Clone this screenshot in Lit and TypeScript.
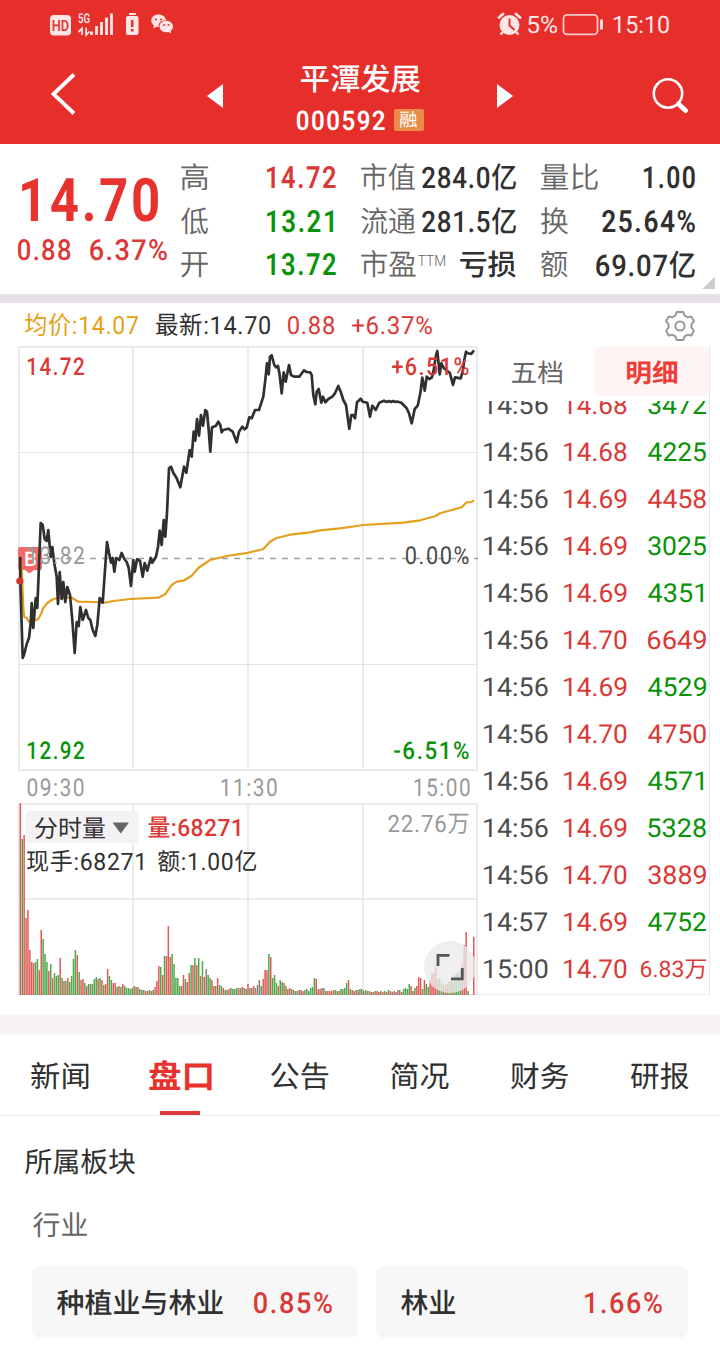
import { LitElement, html, svg, css } from "lit";
import { customElement } from "lit/decorators.js";

const FAMILY = 'Roboto, "Noto Sans CJK SC", sans-serif';
const CJK = '"Noto Sans CJK SC", sans-serif';
const RED = "#d93a37";
const GREEN = "#0a930a";
const INK = "#303030";
const GREY = "#666";

interface Style {
  size: number;
  color?: string;
  weight?: number;
  spacing?: number;
  family?: string;
}

const ctx = document.createElement("canvas").getContext("2d")! as any;

/* Text whose ink begins at x and is exactly `width` wide. */
function ink(text: string, x: number, baseline: number, width: number, s: Style) {
  const weight = s.weight ?? 400;
  const spacing = (s.spacing ?? 0) * s.size;
  const family = s.family ?? FAMILY;
  // Measured at ten times the size, where hinting no longer rounds the bounds.
  ctx.font = `${weight} ${s.size * 10}px ${family}`;
  ctx.letterSpacing = `${spacing * 10}px`;
  ctx.textRendering = "geometricPrecision";
  const m = ctx.measureText(text);
  const left = -m.actualBoundingBoxLeft / 10;
  const right = m.actualBoundingBoxRight / 10;
  const k = width / (right - left);
  return svg`<text transform=${`translate(${(x - left * k).toFixed(2)} ${baseline}) scale(${k.toFixed(4)} 1)`}
    font-family=${family} font-size=${s.size} font-weight=${weight} letter-spacing=${spacing}
    text-rendering="geometricPrecision" fill=${s.color ?? INK}>${text}</text>`;
}

/* The same text as a box for flex and grid rows, centred on its line. */
function label(text: string, width: number, s: Style, rise = 0.356) {
  const h = Math.round(s.size * 1.2);
  return html`<svg class="label" width=${width} height=${h}>${ink(text, 0, h / 2 + s.size * rise, width, s)}</svg>`;
}
const hanzi = (text: string, width: number, s: Style) => label(text, width, { family: CJK, ...s }, 0.36);

const PRICE = `20.3,558 20.3,580 22.7,658 24,655 26.7,644 29,638 30.7,623 31.7,603 33.3,628 35.7,598 37.3,608 40.7,523 42.7,525 44.7,539 46.7,541 48.3,530 50.7,557 52.3,547 54.3,563 56.7,577 58,604 59.7,572 61.7,599 63.3,582 65.3,602 67.3,587 70,595 72.3,620 74.7,653 76.7,622 78.7,626 80.3,607 82.7,620 86,610 88.3,618 90.3,620 92.7,630 95.3,636 97.3,625 99.7,598 102.7,602.7 107,542 109,553 111,562.7 112.7,558 114.3,571.7 116.3,558 119.3,560 121.7,553 124.3,559 126.7,562 128.7,568 131,586 133.3,560 134.7,571.7 137,559.3 140,560.7 142.7,576.7 144.7,563 147.3,570.7 150.7,558 152.3,562.7 156,556.7 158,547 159.7,530.7 161.7,545 163.7,520 165.3,536.7 167,513 169,468.3 171,466.7 173.3,472.7 176.7,478.3 180.3,487.3 184,466.7 186.3,472.7 189.7,450 191.7,456.7 193.7,431.7 195.3,440.7 197,419 199,435.7 201,415 203,425.7 205.3,410 207,411.7 208.7,430 210.3,451.7 212,427.3 215.7,426 218.3,421.7 220.3,425 221.7,432.3 223.3,430 228.3,428.7 232.7,431.7 236.7,442.3 239,431.7 242.3,426.7 244.7,429.3 246.7,427.5 249.3,417.3 251.7,418.3 255,410 259,410 263.3,396.7 265.3,380 267,363.3 268.7,374.3 270,356.7 271.7,355.3 274.3,365 276,367.3 278,366 279.7,375 281.7,393.3 283.7,372.3 285.7,381.7 289,365 291,375 294,376.7 299.3,376.7 304,370.3 306.7,372 310.3,372.3 311.7,375 313.3,395 315.3,404.3 316.7,391.7 318.7,389 321.3,402.7 323,396.7 325.3,402.3 328.3,399 332.3,396.7 335,393.3 338.3,386 340.7,391.7 343.3,400 346,405 349.3,428.7 351.3,415 353.3,415 355,418.3 357,402.3 360.7,398.7 362.7,401.7 367.3,402.7 370,416.7 372.3,405.7 375.7,410 379.3,402.7 384,400.7 386.7,402 389,401 391,402 393,401 395,402 397,401.5 401.3,402.7 406.7,408.3 409,413.3 411.7,423.3 414.7,409 417.7,405.7 420.3,393.3 422.3,377.7 424.7,390.7 426.7,376.7 429.3,379 432,377.3 433.7,370 435.7,356.7 437.3,351 439.7,374.3 441.3,363.3 444,368.3 449.7,372.7 451.3,378.3 453,385 455,377.3 460.7,378.3 462.7,371.7 464.3,360 466,351.7 467.7,353.3 471,354 473.3,351.3`;

const AVERAGE = `20.3,560 22,573 23.3,608 24.3,616.7 26.7,618 29,621.7 33.3,621 38.3,619 41,614 43.3,608 47.3,603 53.3,599 60,598 71.7,597.7 78.3,601.7 93.3,602 105,602.7 113.3,601 130,599 158.3,597.7 165,594.3 171.7,585 176.7,581.7 183.3,580.7 191.7,575.7 198.3,568 210,560 226.7,556 248,552.8 263.3,549 270,541.7 276.7,538 290,534.7 310,532.3 320,530.3 340,528.3 363.3,525 386.7,523.7 403.3,522.7 420,520.3 435,516.3 440,513.3 461.7,507.3 466.7,502.3 471,502 473.3,501`;

/* One bar per minute: height and direction (r up, g down, k flat). */
const VOLUME = (
  "192r 156g 160r 77r 85r 45r 33r 32r 33g 36g 25r 65r 56g 41g 33g 24r 31g 17r 22g 19g 20g 37r 17g 14r 14g 17r 13g 19g 36g 45g " +
  "40r 23g 15r 16r 12g 9r 11g 11k 11g 16g 18g 16r 17g 15r 10g 11r 26r 19g 15g 12r 12r 8g 9r 8g 11r 9g 7g 7g 6g 7g " +
  "9r 8g 8r 6g 5k 5g 4r 4k 5r 4g 5g 8r 14r 29r 28g 20r 39g 39r 69r 38r 41g 31g 17g 17g 9g 9r 20r 16g 13r 22r " +
  "30g 30r 37g 30r 37g 19r 34g 18r 26k 20g 17g 15r 9r 9g 17r 10k 9g 7r 5k 5g 6r 7g 6g 6k 7g 7r 7g 8r 7k 6g " +
  "11r 7r 7g 9r 7k 10k 15k 9g 16r 25r 25r 41g 38r 17g 20g 12g 9r 15g 13g 12r 9g 6r 7r 6g 5k 4k 4g 5r 5k 4r " +
  "5g 6k 4g 7g 8g 17g 16r 6r 6k 7r 7g 4r 4k 4r 4r 5r 5g 4g 4r 6g 6g 7g 12g 15r 6g 5k 4r 5r 5g 6k " +
  "6g 4r 5g 4k 4g 3r 3r 4g 4r 3r 4k 3r 4g 3r 5g 4r 3k 4r 3r 5k 5k 3r 6g 7g 6g 11g 9r 4r 7g 9r " +
  "18r 17r 6g 15r 11g 8g 15r 22r 22r 28r 16k 17g 12r 11g 10k 11r 13g 14r 15g 20k 22g 22g 25g 32r 50r 63r 4g 0k 0k 58r"
).split(" ");

const BAR: Record<string, string> = { r: "#e05a58", g: "#4fa849", k: "#8c8080" };

const TICKS: [string, string, string, boolean][] = [
  ["14:56", "14.68", "3472", false],
  ["14:56", "14.68", "4225", false],
  ["14:56", "14.69", "4458", true],
  ["14:56", "14.69", "3025", false],
  ["14:56", "14.69", "4351", false],
  ["14:56", "14.70", "6649", true],
  ["14:56", "14.69", "4529", false],
  ["14:56", "14.70", "4750", true],
  ["14:56", "14.69", "4571", false],
  ["14:56", "14.69", "5328", false],
  ["14:56", "14.70", "3889", true],
  ["14:57", "14.69", "4752", false],
  ["15:00", "14.70", "6.83万", true],
];

const shared = css`
  * { box-sizing: border-box; }
  svg { display: block; flex: none; overflow: visible; }
`;

@customElement("app-header")
export class AppHeader extends LitElement {
  static styles = [shared, css`
    :host { display: block; height: 144px; background: #e62e2b; }
    .status { display: flex; justify-content: space-between; height: 48px; padding: 0 50px; align-items: center; }
    .left, .right { display: flex; align-items: center; height: 48px; }
    .nav { display: flex; height: 96px; }
    .title { width: 240px; display: flex; flex-direction: column; align-items: center; padding-top: 13px; gap: 6px; }
    .code { display: flex; align-items: center; gap: 9px; width: 127px; }
    .badge { width: 30px; height: 22px; border-radius: 2px; background: #e88c48; display: flex; align-items: center; justify-content: center; }
  `];
  render() {
    const pale = "#ffe6e6";
    return html`
      <div class="status">
        <div class="left">
          <svg width="124" height="48">
            <rect y="15" width="21" height="20.5" rx="4" fill=${pale} />
            ${ink("HD", 2.5, 30.7, 16, { size: 15.5, weight: 600, color: "#e23b3a" })}
            ${ink("5G", 28.5, 22.8, 11, { size: 13.5, weight: 600, color: pale })}
            <path d="M32 35V28.500l-3.500 3.500M36.200 27.500v7.500l3.300-3.500" fill="none" stroke=${pale} stroke-width="1.8" />
            <path d="M41.500 31.500v3.500M46.500 26v9M51.500 22v13M56.500 17.500v17.500M61.500 13.500v21.500" stroke=${pale} stroke-width="2.8" />
            <rect x="79" y="13" width="7" height="2" fill=${pale} />
            <rect x="76" y="16" width="12.500" height="19" rx="2" fill=${pale} />
            <path d="M82.200 20v7M82.200 29v2.500" stroke="#df3432" stroke-width="2.600" />
            <path d="M108.500 14.500c-4.200 0-7.200 2.700-7.200 6 0 2 1 3.700 2.700 4.900l-.7 3 3-1.700c1 .3 1.700.4 2.400.4-.8-4 2.600-7.300 7.600-6.900-.7-3.400-3.900-5.700-7.800-5.700z" fill=${pale} />
            <path d="M116.200 20.800c-3.900 0-6.700 2.500-6.700 5.700s2.900 5.700 6.700 5.700c.8 0 1.500-.1 2.200-.3l2.800 1.600-.6-2.600c1.500-1 2.400-2.600 2.400-4.400 0-3.200-2.900-5.700-6.800-5.700z" fill=${pale} />
            <g fill="#dc3937"><circle cx="106" cy="19.500" r="1.100" /><circle cx="111" cy="19.500" r="1.100" /><circle cx="114" cy="25" r="1" /><circle cx="118.500" cy="25" r="1" /></g>
          </svg>
        </div>
        <div class="right">
          <svg width="172" height="48">
            <circle cx="11.500" cy="25" r="10" fill=${pale} />
            <path d="M1 17.500l4-3.500M22 17.500l-4-3.500" stroke=${pale} stroke-width="2.800" stroke-linecap="round" />
            <path d="M5 32l-2.500 2.500M18 32l2.500 2.500" stroke=${pale} stroke-width="2.400" />
            <path d="M11.500 18.500v7l5 4.500" fill="none" stroke="#e23331" stroke-width="2" />
            ${ink("5%", 30, 33, 29, { size: 24, color: pale })}
            <rect x="65.500" y="14.800" width="34" height="19.500" rx="3.500" fill="none" stroke=${pale} stroke-width="1.800" stroke-opacity=".85" />
            <path d="M103.500 19.500v10" stroke=${pale} stroke-width="2.800" />
            ${ink("15:10", 116, 33, 55, { size: 24, color: pale })}
          </svg>
        </div>
      </div>
      <div class="nav">
        <svg width="240" height="96">
          <path d="M74 26.500L53.500 46L74 65.500" fill="none" stroke="#fff" stroke-width="3.800" />
          <path d="M223 36v24l-16-12z" fill="#fff" />
        </svg>
        <div class="title">
          ${hanzi("平潭发展", 119, { size: 30.5, weight: 500, color: "#fff" })}
          <div class="code">
            ${label("000592", 88, { size: 27, weight: 600, color: "#fff", spacing: 0.06 })}
            <div class="badge">${hanzi("融", 17, { size: 18, color: "#fff" })}</div>
          </div>
        </div>
        <svg width="240" height="96">
          <path d="M17 36v24l16-12z" fill="#fff" />
          <circle cx="188" cy="45.500" r="14.200" fill="none" stroke="#fff" stroke-width="2.600" />
          <path d="M198.500 56l7 6.500" stroke="#fff" stroke-width="5" stroke-linecap="round" />
        </svg>
      </div>`;
  }
}

@customElement("quote-panel")
export class QuotePanel extends LitElement {
  static styles = [shared, css`
    :host { display: grid; position: relative; height: 159px; padding: 12px 25px 15px 17px; grid-template-columns: 151px 155px 155px 154px; column-gap: 13px; background: #fff; border-bottom: 9px solid #e6e1e6; }
    .col { display: grid; grid-template-rows: repeat(3, 43.5px); }
    .col:nth-child(3) { margin-left: 12px; margin-right: -12px; }
    .col:nth-child(4) { margin-left: 24px; margin-right: -24px; }
    .cell { display: flex; align-items: center; justify-content: space-between; }
    .name { display: flex; gap: 2px; }
    .ttm { padding-top: 4px; }
    .last { padding: 8px 0 0 4.500px; }
    .delta { display: flex; gap: 19px; padding-left: 1px; margin-top: -4px; }
    .corner { position: absolute; right: 5px; bottom: 5px; width: 12px; height: 12px; background: linear-gradient(135deg, transparent 50%, #ccc 50%); }
  `];
  render() {
    const num = (t: string, w: number, color = INK) => label(t, w, { size: 30.5, weight: 600, color, spacing: 0.06 });
    const name = (t: string, w: number) => hanzi(t, w, { size: 29.5, color: GREY, weight: 350 });
    return html`
      <div>
        <div class="last">${label("14.70", 136, { size: 60, weight: 700, color: "#e7322e", spacing: 0.05 })}</div>
        <div class="delta">
          ${label("0.88", 52.5, { size: 29, weight: 500, color: RED, spacing: 0.05 })}
          ${label("6.37%", 77, { size: 29, weight: 500, color: RED, spacing: 0.05 })}
        </div>
      </div>
      <div class="col">
        <div class="cell">${name("高", 27)}${num("14.72", 69, RED)}</div>
        <div class="cell">${name("低", 27)}<div style="padding-right:3px">${num("13.21", 66, GREEN)}</div></div>
        <div class="cell">${name("开", 27)}${num("13.72", 69, GREEN)}</div>
      </div>
      <div class="col">
        <div class="cell">${name("市值", 54)}${label("284.0亿", 94, { size: 29.5, weight: 500, spacing: 0.03 })}</div>
        <div class="cell">${name("流通", 54)}${label("281.5亿", 94, { size: 29.5, weight: 500, spacing: 0.03 })}</div>
        <div class="cell">
          <div class="name">${name("市盈", 55)}<div class="ttm">${label("TTM", 27, { size: 15.5, color: GREY, weight: 350 })}</div></div>
          ${hanzi("亏损", 56, { size: 29, weight: 500 })}
        </div>
      </div>
      <div class="col">
        <div class="cell">${name("量比", 57)}${num("1.00", 51)}</div>
        <div class="cell">${name("换", 27)}${num("25.64%", 93)}</div>
        <div class="cell">${name("额", 27)}${label("69.07亿", 99, { size: 30, weight: 500, spacing: 0.03 })}</div>
      </div>
      <div class="corner"></div>`;
  }
}

@customElement("minute-chart")
export class MinuteChart extends LitElement {
  static styles = [shared, css`:host { display: block; width: 479px; }`];
  render() {
    const side = (t: string, x: number, y: number, w: number, color: string, weight = 500) =>
      ink(t, x, y, w, { size: 24.5, weight, color, spacing: 0.07 });
    const xs = [19, 133, 248, 363, 477];
    return html`<svg width="479" height="650" viewBox="0 346 479 650">
      <g stroke="#ebebeb" stroke-width="2" fill="none">
        ${xs.map((x) => svg`<path d=${`M${x} 346V771M${x} 803V995`} />`)}
        <path d="M18 347H478M18 770H478M18 804H478M18 899H478" />
        <path d="M18 452.500H478M18 664.500H478M18 994.500H478" stroke-width="1" stroke="#e2e2e2" />
      </g>
      <path d="M90 558.500H478" stroke="#a0a0a0" stroke-width="1.600" stroke-dasharray="6 6" />
      ${VOLUME.map((v, i) => {
        const h = parseInt(v);
        const x = (19.6 + i * 1.897).toFixed(2);
        return svg`<rect x=${x} y=${995 - h} width="1.500" height=${h} fill=${BAR[v.slice(-1)]} />`;
      })}
      <path d="M20 547h20a2 2 0 0 1 2 2v19a2 2 0 0 1-2 2h-6l-4.500 3.500-4.500-3.500h-5a2 2 0 0 1-2-2v-19a2 2 0 0 1 2-2z" fill="#f26a6a" />
      ${ink("B", 25.5, 566, 10.5, { size: 20, color: "#fff", weight: 500 })}
      <polyline points=${AVERAGE} fill="none" stroke="#e3a01f" stroke-width="2.200" stroke-linejoin="round" stroke-linecap="round" />
      <polyline points=${PRICE} fill="none" stroke="#303030" stroke-width="2.700" stroke-linejoin="round" stroke-linecap="round" />
      <circle cx="19.800" cy="581" r="3.600" fill="#d43434" />
      ${side("14.72", 28, 375, 56, RED)}
      ${side("+6.51%", 392, 375, 76.5, RED)}
      ${side("13.82", 28, 564, 56, "#999", 450)}
      <path d="M42 558.500H84" stroke="#a0a0a0" stroke-width="1.500" stroke-dasharray="6 6" />
      ${side("0.00%", 406, 564, 62.5, "#4a4a4a", 450)}
      ${side("12.92", 28, 759, 56, GREEN)}
      ${side("-6.51%", 394, 759, 74.5, GREEN)}
      ${side("09:30", 27.5, 796, 56, "#999", 450)}
      ${side("11:30", 221.5, 796, 55, "#999", 450)}
      ${side("15:00", 414.5, 796, 55, "#999", 450)}
      <rect x="26" y="811" width="113" height="32" rx="4" fill="#f5f2f5" />
      ${ink("分时量", 35, 836.5, 70, { size: 24, family: CJK })}
      <path d="M112.500 822.500h16.500l-8.250 11z" fill="#666" />
      ${ink("量:68271", 148.5, 836, 91, { size: 24, weight: 500, color: RED, spacing: 0.02 })}
      ${ink("现手:68271", 27, 869.5, 115.5, { size: 24, spacing: 0.03 })}
      ${ink("额:1.00亿", 158, 869.5, 98, { size: 24, spacing: 0.03 })}
      ${ink("22.76万", 388.5, 832, 80, { size: 24, color: "#999", spacing: 0.04 })}
      <circle cx="450" cy="967" r="26" fill="#ebebeb" fill-opacity=".78" />
      <path d="M438 966V955.300H449.500M462.300 968V978.800H451" fill="none" stroke="#555" stroke-width="2.800" />
    </svg>`;
  }
}

@customElement("tick-panel")
export class TickPanel extends LitElement {
  static styles = [shared, css`
    :host { display: block; width: 231px; height: 649px; border-right: 1px solid #e8e8e8; border-bottom: 1px solid #ececec; }
    .tabs { display: flex; height: 55px; }
    .tab { width: 115px; height: 50px; padding-top: 2px; display: flex; align-items: center; justify-content: center; }
    .active { background: #fff4f4; border-radius: 6px; }
    .list { height: 593px; overflow: hidden; }
    .row { display: flex; justify-content: space-between; align-items: center; height: 47px; padding: 0 3px 0 5px; }
    .row:first-child { margin-top: -20px; }
    .value { width: 64px; display: flex; margin-right: -5px; }
    .amount { width: 66px; display: flex; justify-content: flex-end; }
    .amount.one { padding-right: 3px; }
  `];
  render() {
    return html`
      <div class="tabs">
        <div class="tab">${hanzi("五档", 50, { size: 25.5, color: GREY })}</div>
        <div class="tab active">${hanzi("明细", 50, { size: 25.5, weight: 700, color: "#ee3d38" })}</div>
      </div>
      <div class="list">
        ${TICKS.map(([time, price, amount, up]) => {
          const wide = amount.endsWith("万");
          const one = amount.endsWith("1");
          return html`<div class="row">
            ${label(time, 63.5, { size: 26, color: "#4c4c4c" })}
            <div class="value">${label(price, 62.5, { size: 26, color: RED })}</div>
            <div class="amount ${one ? "one" : ""}">${label(amount, wide ? 65 : one ? 55 : 58, { size: wide ? 23 : 26, color: up ? RED : GREEN })}</div>
          </div>`;
        })}
      </div>`;
  }
}

@customElement("sector-section")
export class SectorSection extends LitElement {
  static styles = [shared, css`
    :host { display: block; border-top: 20px solid #f7f3f7; }
    .tabs { display: grid; grid-template-columns: repeat(6, 1fr); height: 81px; border-bottom: 1px solid #ebebeb; }
    .tab { display: flex; align-items: center; justify-content: center; border-bottom: 4px solid transparent; height: 80px; padding-top: 6px; }
    .tab.active { background: linear-gradient(#d93a37, #d93a37) bottom center / 40px 4px no-repeat; background-origin: border-box; background-clip: border-box; }
    .heading { padding: 29px 0 0 25px; }
    .kind { padding: 30px 0 0 33px; }
    .cards { display: grid; grid-template-columns: 326px 312px; gap: 18px; padding: 24px 32px 0; }
    .card { display: flex; justify-content: space-between; align-items: center; height: 72px; padding: 1px 26px 0 25px; border-radius: 8px; background: #f7f7f7; }
  `];
  render() {
    const tabs = ["新闻", "盘口", "公告", "简况", "财务", "研报"];
    return html`
      <div class="tabs">
        ${tabs.map((t, i) => html`<div class="tab ${i === 1 ? "active" : ""}">
          ${i === 1
            ? hanzi(t, 63, { size: 32.5, weight: 700, color: "#e7322e" })
            : hanzi(t, 57.5, { size: 29.5 })}
        </div>`)}
      </div>
      <div class="heading">${hanzi("所属板块", 110, { size: 28 })}</div>
      <div class="kind">${hanzi("行业", 54, { size: 27.5, color: GREY })}</div>
      <div class="cards">
        <div class="card">${hanzi("种植业与林业", 166, { size: 28, weight: 500 })}${label("0.85%", 78, { size: 29, weight: 500, color: RED, spacing: 0.06 })}</div>
        <div class="card">${hanzi("林业", 54, { size: 28, weight: 500 })}${label("1.66%", 77, { size: 29, weight: 500, color: RED, spacing: 0.06 })}</div>
      </div>`;
  }
}

@customElement("app-root")
export class AppRoot extends LitElement {
  static styles = [shared, css`
    :host { display: block; width: 720px; height: 1355px; overflow: hidden; background: #fff; }
    .summary { display: flex; align-items: center; height: 43px; padding: 2px 25px 0 25px; }
    .summary .item { margin: -2px 18px 0 0; }
    .gear { margin-left: auto; }
    .market { display: flex; height: 669px; }
  `];
  render() {
    const s = { size: 25, spacing: 0.03 };
    return html`
      <app-header></app-header>
      <quote-panel></quote-panel>
      <div class="summary">
        <div class="item">${label("均价:14.07", 113, { ...s, color: "#e6a117" })}</div>
        <div class="item">${label("最新:14.70", 114, s)}</div>
        <div class="item">${label("0.88", 46, { ...s, color: RED })}</div>
        <div class="item">${label("+6.37%", 80, { ...s, color: RED })}</div>
        <svg class="gear" width="30" height="30" viewBox="-15 -15 30 30" fill="none" stroke="#999" stroke-width="2">
          <path d="M-3.300-14H3.300L4.600-10.300Q6.300-9.600 7.500-8.700L11.300-9.500L14-4.800L11.500-1.800V1.800L14 4.800L11.300 9.500L7.500 8.700Q6.300 9.600 4.600 10.300L3.300 14H-3.300L-4.600 10.300Q-6.300 9.600-7.500 8.700L-11.300 9.500L-14 4.800L-11.500 1.800V-1.800L-14-4.800L-11.300-9.500L-7.500-8.700Q-6.300-9.600-4.600-10.300Z" stroke-linejoin="round" />
          <circle r="4.600" />
        </svg>
      </div>
      <div class="market">
        <minute-chart></minute-chart>
        <tick-panel></tick-panel>
      </div>
      <sector-section></sector-section>`;
  }
}
